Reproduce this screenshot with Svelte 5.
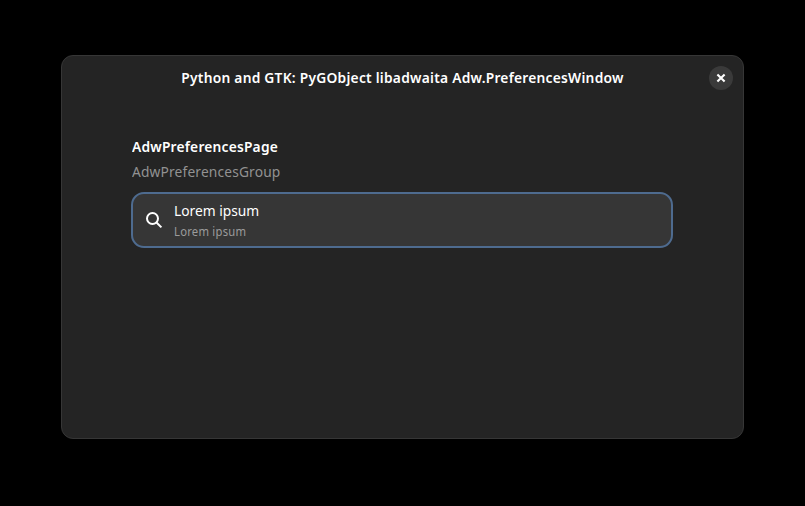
<script>
  const rows = [{ title: 'Lorem ipsum', subtitle: 'Lorem ipsum' }];
</script>

<div class="desktop">
  <div class="window">
    <header>
      <h1>Python and GTK: PyGObject libadwaita Adw.PreferencesWindow</h1>
      <button aria-label="Close">
        <svg width="10" height="10" viewBox="0 0 10 10"><path d="M1.4 1.4 8.6 8.6M8.6 1.4 1.4 8.6" /></svg>
      </button>
    </header>
    <main>
      <h2>AdwPreferencesPage</h2>
      <p class="description">AdwPreferencesGroup</p>
      {#each rows as row}
        <div class="row">
          <svg width="18" height="18" viewBox="0 0 18 18"><circle cx="7.5" cy="7.5" r="5.5" /><path d="m11.5 11.5 4.9 4.9" /></svg>
          <div class="labels">
            <span class="title">{row.title}</span>
            <span class="subtitle">{row.subtitle}</span>
          </div>
        </div>
      {/each}
    </main>
  </div>
</div>

<style>
  :global(body) { background: #000; }
  * { box-sizing: border-box; }
  .desktop {
    height: 506px;
    padding: 55px 61px 67px;
    background: #000;
    font-family: "Noto Sans", "Open Sans", sans-serif;
    color: #fff;
  }
  .window {
    height: 384px;
    border: 1px solid #363636;
    border-radius: 12px;
    background: #242424;
  }
  header {
    display: grid;
    grid-template-columns: 34px 1fr 34px;
    height: 43px;
    align-items: center;
  }
  h1, h2, p { margin: 0; white-space: nowrap; }
  h1 {
    grid-column: 2;
    padding-bottom: 2px;
    text-align: center;
    font-size: 14.67px;
    line-height: 20px;
    font-weight: 600;
    letter-spacing: 0.26px;
    transform: scaleX(0.94);
  }
  button {
    display: flex;
    align-items: center;
    justify-content: center;
    width: 24px;
    height: 24px;
    padding: 0;
    border: 0;
    border-radius: 50%;
    background: #3a3a3a;
  }
  svg { flex: none; fill: none; stroke: #fff; stroke-width: 2; }
  button svg { stroke-width: 2.1; }
  main { padding: 37px 70px 0; }
  h2, .description, .title, .subtitle { transform: scaleX(0.94); transform-origin: left; }
  h2 { font-size: 14.67px; line-height: 20px; font-weight: 600; letter-spacing: 0.22px; }
  .description {
    margin-top: 5px;
    font-size: 14.67px;
    line-height: 20px;
    letter-spacing: 0.16px;
    color: #929292;
  }
  .row {
    display: flex;
    align-items: center;
    gap: 11px;
    height: 56px;
    margin: 11px 0 0 -1px;
    padding: 0 12px;
    border: 2px solid #4e6b8f;
    border-radius: 13px;
    background: #363636;
  }
  .labels { display: flex; flex-direction: column; gap: 3px; }
  .title { font-size: 14.67px; line-height: 20px; }
  .subtitle { font-size: 12px; line-height: 17px; letter-spacing: 0.24px; color: #9b9b9b; }
</style>
